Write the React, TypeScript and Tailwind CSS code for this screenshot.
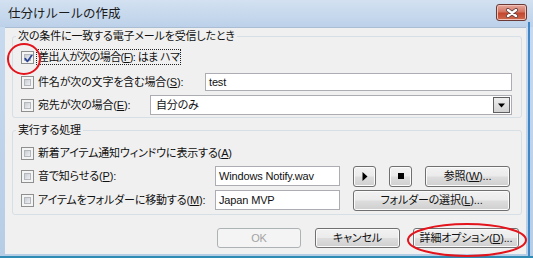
import React from "react";

function Check({ checked }: { checked?: boolean }) {
  return (
    <div className="relative w-[13px] h-[13px] shrink-0 border border-[#8e8f8f] bg-[#f4f4f4] p-[2px]">
      <div className="w-full h-full border border-[#b3b8bd] bg-[linear-gradient(135deg,#c9ced4,#eef0f2)]" />
      {checked && (
        <svg className="absolute left-[1px] top-[1px]" width="11" height="11" viewBox="0 0 11 11">
          <path d="M2.2 5.6 L4.4 8.4 L8.9 2.2" fill="none" stroke="#2b4394" strokeWidth="1.7" strokeLinecap="round" strokeLinejoin="round" />
        </svg>
      )}
    </div>
  );
}

function Label({ children, focus }: { children: React.ReactNode; focus?: boolean }) {
  return (
    <span
      className={
        focus
          ? "ml-[2px] px-[1px] border border-dotted border-[#222] leading-[14px] whitespace-nowrap tracking-[-0.6px]"
          : "ml-[2px] px-[1px] border border-transparent leading-[14px] whitespace-nowrap"
      }
    >
      {children}
    </span>
  );
}

function Btn({ children, className }: { children: React.ReactNode; className?: string }) {
  return (
    <div
      className={
        "flex items-center justify-center shrink-0 rounded-[3px] border border-[#707070] bg-[linear-gradient(#f2f2f2_0%,#ebebeb_48%,#dddddd_52%,#cfcfcf_100%)] shadow-[inset_0_0_0_1px_#fbfbfb] leading-[14px] whitespace-nowrap " +
        (className ?? "")
      }
    >
      {children}
    </div>
  );
}

export default function App() {
  return (
    <div className="relative w-[533px] h-[258px] overflow-hidden flex flex-col bg-[linear-gradient(#c9dbef,#b6cde6)] font-['Liberation_Sans','Noto_Sans_CJK_JP',sans-serif] text-[11px] tracking-[-0.15px] text-[#111] [font-feature-settings:'palt']">
      {/* title bar */}
      <div className="h-[27px] shrink-0 flex items-center justify-between pl-[8px] pr-[6px] bg-[linear-gradient(#d3e1f1,#bcd1e9)]">
        <span className="text-[12.5px] tracking-normal text-[#1b1b1b] leading-[16px] [font-feature-settings:normal] mt-[1px]">仕分けルールの作成</span>
        <div className="w-[31px] h-[17px] -mt-[2px] rounded-[3px] border border-[#6b3a36] bg-[linear-gradient(#e6a99d_0%,#d47563_45%,#c3472f_55%,#cf6a4f_100%)] flex items-center justify-center shadow-[inset_0_0_0_1px_#f0c2b8]">
          <svg width="14" height="10" viewBox="0 0 14 10">
            <path d="M3 2 L11 8 M11 2 L3 8" stroke="#5a3a3a" strokeWidth="4" strokeLinecap="round" />
            <path d="M3 2 L11 8 M11 2 L3 8" stroke="#ffffff" strokeWidth="2.4" strokeLinecap="round" />
          </svg>
        </div>
      </div>

      {/* content */}
      <div className="flex-1 ml-[5px] mr-[7px] mb-[4px] bg-[#f0f0f0] border-t border-[#a9bdd3] flex flex-col">
        {/* group 1 */}
        <fieldset className="mt-[1px] ml-[7px] mr-[4px] border border-[#d5dfe5] rounded-[3px] pb-[1px]">
          <legend className="ml-[3px] px-[2px] leading-[14px]">次の条件に一致する電子メールを受信したとき</legend>
          <div className="pl-[8px] pt-[4px] flex flex-col">
            <div className="h-[20px] flex items-center">
              <Check checked />
              <Label focus>
                差出人が次の場合(<u>F</u>): はま ハマ
              </Label>
            </div>
            <div className="h-[22px] mt-[4px] flex items-center">
              <div className="w-[184px] shrink-0 flex items-center">
                <Check />
                <Label>
                  件名が次の文字を含む場合(<u>S</u>):
                </Label>
              </div>
              <div className="w-[307px] h-[18px] border border-[#abadb3] bg-white pl-[3px] flex items-center leading-[14px]">test</div>
            </div>
            <div className="h-[22px] mt-[1px] flex items-center">
              <div className="w-[129px] shrink-0 flex items-center">
                <Check />
                <Label>
                  宛先が次の場合(<u>E</u>):
                </Label>
              </div>
              <div className="w-[362px] h-[20px] border border-[#abadb3] bg-white p-[1px] flex items-center justify-between">
                <span className="pl-[4px] leading-[14px]">自分のみ</span>
                <div className="w-[17px] h-[16px] border border-[#5f5f5f] bg-[linear-gradient(#eeeeee,#d2d2d2)] flex items-center justify-center">
                  <svg width="7" height="5" viewBox="0 0 7 5">
                    <path d="M0 0.5 H7 L3.5 4.5 Z" fill="#000" />
                  </svg>
                </div>
              </div>
            </div>
          </div>
        </fieldset>

        {/* group 2 */}
        <fieldset className="mt-[5px] ml-[7px] mr-[4px] border border-[#d5dfe5] rounded-[3px] pb-[3px]">
          <legend className="ml-[3px] px-[2px] leading-[14px]">実行する処理</legend>
          <div className="pl-[8px] pt-[6px] flex flex-col">
            <div className="h-[20px] flex items-center">
              <Check />
              <Label>
                新着アイテム通知ウィンドウに表示する(<u>A</u>)
              </Label>
            </div>
            <div className="h-[22px] mt-[2px] flex items-center">
              <div className="w-[194px] shrink-0 flex items-center">
                <Check />
                <Label>
                  音で知らせる(<u>P</u>):
                </Label>
              </div>
              <div className="w-[125px] h-[20px] border border-[#abadb3] bg-white pl-[3px] flex items-center leading-[14px] whitespace-nowrap">Windows Notify.wav</div>
              <Btn className="ml-[13px] w-[23px] h-[21px]">
                <svg width="6" height="9" viewBox="0 0 6 9">
                  <path d="M0.5 0 L5.5 4.5 L0.5 9 Z" fill="#000" />
                </svg>
              </Btn>
              <Btn className="ml-[13px] w-[23px] h-[21px]">
                <div className="w-[6px] h-[6px] bg-black" />
              </Btn>
              <Btn className="ml-[13px] w-[85px] h-[21px]">
                参照(<u>W</u>)...
              </Btn>
            </div>
            <div className="h-[22px] mt-[2px] flex items-center">
              <div className="w-[194px] shrink-0 flex items-center">
                <Check />
                <Label>
                  アイテムをフォルダーに移動する(<u>M</u>):
                </Label>
              </div>
              <div className="w-[125px] h-[20px] border border-[#abadb3] bg-white pl-[3px] flex items-center leading-[14px] whitespace-nowrap">Japan MVP</div>
              <Btn className="ml-[13px] w-[157px] h-[21px]">
                フォルダーの選択(<u>L</u>)...
              </Btn>
            </div>
          </div>
        </fieldset>

        {/* bottom buttons */}
        <div className="mt-[13px] flex items-center pl-[212px]">
          <div className="w-[84px] h-[20px] rounded-[3px] border border-[#adb2b5] bg-[#f4f4f4] text-[#a3a3a3] flex items-center justify-center leading-[14px]">OK</div>
          <Btn className="ml-[14px] w-[85px] h-[20px]">キャンセル</Btn>
          <Btn className="ml-[13px] w-[106px] h-[20px]">
            詳細オプション(<u>D</u>)...
          </Btn>
        </div>
      </div>

      {/* window frame accents */}
      <div className="absolute right-[3px] top-[22px] bottom-[2px] w-[2px] bg-[#3f86c6]" />
      <div className="absolute left-0 right-0 bottom-0 h-[2px] bg-[#2f8bb3]" />

      {/* red annotations */}
      <svg className="absolute left-0 top-0 pointer-events-none" width="533" height="258">
        <ellipse cx="24" cy="59" rx="16" ry="15" fill="none" stroke="#e3141c" strokeWidth="2" />
        <ellipse cx="467" cy="240" rx="59" ry="16" fill="none" stroke="#e3141c" strokeWidth="2" />
      </svg>
    </div>
  );
}
